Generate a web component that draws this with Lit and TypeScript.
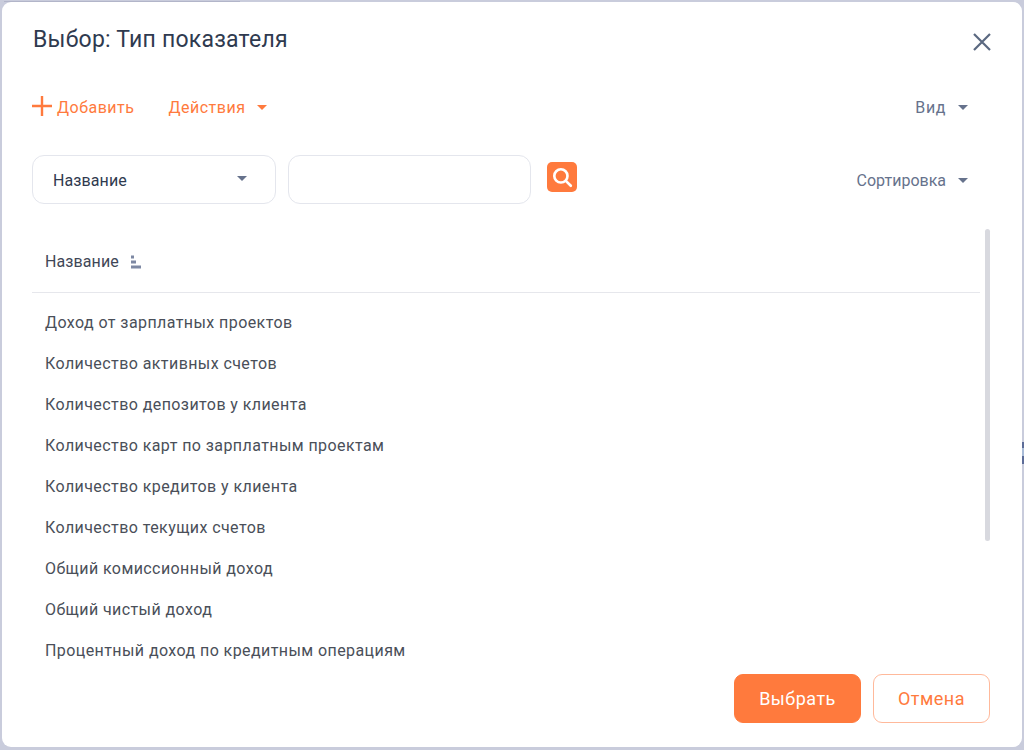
import { LitElement, html, css } from "lit";
import { customElement } from "lit/decorators.js";

const ROWS = [
  "Доход от зарплатных проектов",
  "Количество активных счетов",
  "Количество депозитов у клиента",
  "Количество карт по зарплатным проектам",
  "Количество кредитов у клиента",
  "Количество текущих счетов",
  "Общий комиссионный доход",
  "Общий чистый доход",
  "Процентный доход по кредитным операциям",
];

@customElement("app-root")
export class AppRoot extends LitElement {
  static styles = css`
    :host {
      display: block;
      position: relative;
      width: 1024px;
      height: 750px;
      box-sizing: border-box;
      padding: 2px 2px 3px 2px;
      background: #c9ccdc;
      font-family: Roboto, "Noto Sans", sans-serif;
      overflow: hidden;
    }
    .scrap {
      position: absolute;
      right: 0;
      top: 442px;
      width: 2px;
      height: 22px;
      background: linear-gradient(#5c6c98 0 25%, #a9bcd8 25% 65%, #5c6c98 65%);
    }
    .strip {
      position: absolute;
      left: 4px;
      top: 1px;
      width: 236px;
      height: 1px;
      background: #b2b5c9;
    }
    .modal {
      position: relative;
      height: 100%;
      box-sizing: border-box;
      background: #fff;
      border-radius: 9px;
      padding: 21px 32px 24px 30px;
      display: flex;
      flex-direction: column;
    }
    .head {
      display: flex;
      justify-content: space-between;
      align-items: flex-start;
      height: 32px;
    }
    h1 {
      margin: 1px 0 0 1px;
      font-size: 23px;
      line-height: 32px;
      letter-spacing: 0.22px;
      font-weight: 400;
      color: #2f3a4f;
    }
    .close {
      width: 20px;
      height: 20px;
      margin: 9px -2px 0 0;
    }
    .toolbar {
      display: flex;
      align-items: center;
      justify-content: space-between;
      height: 24px;
      margin-top: 41px;
    }
    .group {
      display: flex;
      align-items: center;
    }
    .action {
      display: flex;
      align-items: center;
      font-size: 16px;
      line-height: 24px;
      letter-spacing: 0.5px;
      color: #ff7a3d;
    }
    .action.add svg {
      width: 20px;
      height: 20px;
      margin: -4px 5px 0 0;
    }
    .action.menu {
      margin-left: 34px;
    }
    .caret {
      width: 0;
      height: 0;
      border-left: 5px solid transparent;
      border-right: 5px solid transparent;
      border-top: 5px solid currentColor;
      margin-left: 12px;
      margin-top: -2px;
    }
    .muted {
      display: flex;
      align-items: center;
      font-size: 16px;
      line-height: 24px;
      color: #66728c;
      margin-right: 22px;
    }
    .view {
      letter-spacing: 0.6px;
    }
    .filters {
      display: flex;
      align-items: flex-start;
      justify-content: space-between;
      margin-top: 35px;
    }
    .controls {
      display: flex;
      align-items: flex-start;
    }
    .field {
      box-sizing: border-box;
      width: 244px;
      height: 49px;
      border: 1px solid #e4e6ed;
      border-radius: 12px;
      display: flex;
      align-items: center;
      justify-content: space-between;
      padding: 2px 28px 0 20px;
      font-size: 16px;
      letter-spacing: 0.1px;
      color: #2f3a4f;
    }
    .field .caret {
      color: #66728c;
      margin: -4px 0 0 0;
    }
    .field + .field {
      margin-left: 12px;
      width: 243px;
    }
    .search {
      width: 30px;
      height: 30px;
      margin: 7px 0 0 16px;
      border-radius: 5px;
      background: #ff7a3d;
      display: flex;
      align-items: center;
      justify-content: center;
    }
    .search svg {
      width: 22px;
      height: 22px;
    }
    .sort {
      margin-top: 14px;
    }
    .body {
      position: relative;
      flex: 1;
      min-height: 0;
      margin-top: 25px;
      padding-right: 10px;
    }
    .thead {
      box-sizing: border-box;
      height: 64px;
      border-bottom: 1px solid #e6e7ec;
      display: flex;
      align-items: center;
      padding: 2px 13px 0 13px;
      font-size: 16px;
      letter-spacing: 0.1px;
      color: #3f4757;
    }
    .thead svg {
      width: 14px;
      height: 14px;
      margin-left: 10px;
    }
    .list {
      padding-top: 9px;
    }
    .row {
      height: 41px;
      line-height: 41px;
      padding-left: 13px;
      font-size: 16px;
      letter-spacing: 0.42px;
      color: #4a4f59;
      white-space: nowrap;
    }
    .thumb {
      position: absolute;
      top: 0;
      right: 0;
      width: 5px;
      height: 312px;
      border-radius: 3px;
      background: #d8d9df;
    }
    .foot {
      display: flex;
      justify-content: flex-end;
      gap: 12px;
      flex: none;
    }
    button {
      font: inherit;
      font-size: 18px;
      letter-spacing: 0.5px;
      height: 49px;
      border-radius: 9px;
      box-sizing: border-box;
      padding: 0;
    }
    .primary {
      width: 127px;
      background: #ff7a3d;
      border: 1px solid #ff7a3d;
      color: #fff;
    }
    .secondary {
      width: 117px;
      background: #fff;
      border: 1px solid #ffb99b;
      color: #ff7a3d;
    }
  `;

  render() {
    return html`
      <div class="scrap"></div>
      <div class="strip"></div>
      <div class="modal">
        <div class="head">
          <h1>Выбор: Тип показателя</h1>
          <svg class="close" viewBox="0 0 20 20" fill="none" stroke="#5a6880" stroke-width="2.2">
            <path d="M2 2 L18 18 M18 2 L2 18" />
          </svg>
        </div>
        <div class="toolbar">
          <div class="group">
            <div class="action add">
              <svg viewBox="0 0 20 20" fill="none" stroke="#ff7a3d" stroke-width="2.4">
                <path d="M10 0 V20 M0 10 H20" />
              </svg>
              Добавить
            </div>
            <div class="action menu">Действия<span class="caret"></span></div>
          </div>
          <div class="muted view">Вид<span class="caret"></span></div>
        </div>
        <div class="filters">
          <div class="controls">
            <div class="field">Название<span class="caret"></span></div>
            <div class="field"></div>
            <div class="search">
              <svg viewBox="0 0 20 20" fill="none" stroke="#fff" stroke-width="2.4">
                <circle cx="9" cy="9" r="6" />
                <path d="M13.5 13.5 L18 18" stroke-linecap="round" />
              </svg>
            </div>
          </div>
          <div class="muted sort">Сортировка<span class="caret"></span></div>
        </div>
        <div class="body">
          <div class="thead">
            Название
            <svg viewBox="0 0 14 14" fill="#7d88a3">
              <rect x="2" y="0.5" width="3" height="3" />
              <rect x="2" y="5.5" width="5" height="3" />
              <rect x="2" y="10.5" width="10" height="3" />
            </svg>
          </div>
          <div class="list">
            ${ROWS.map((r) => html`<div class="row">${r}</div>`)}
          </div>
          <div class="thumb"></div>
        </div>
        <div class="foot">
          <button class="primary">Выбрать</button>
          <button class="secondary">Отмена</button>
        </div>
      </div>
    `;
  }
}
